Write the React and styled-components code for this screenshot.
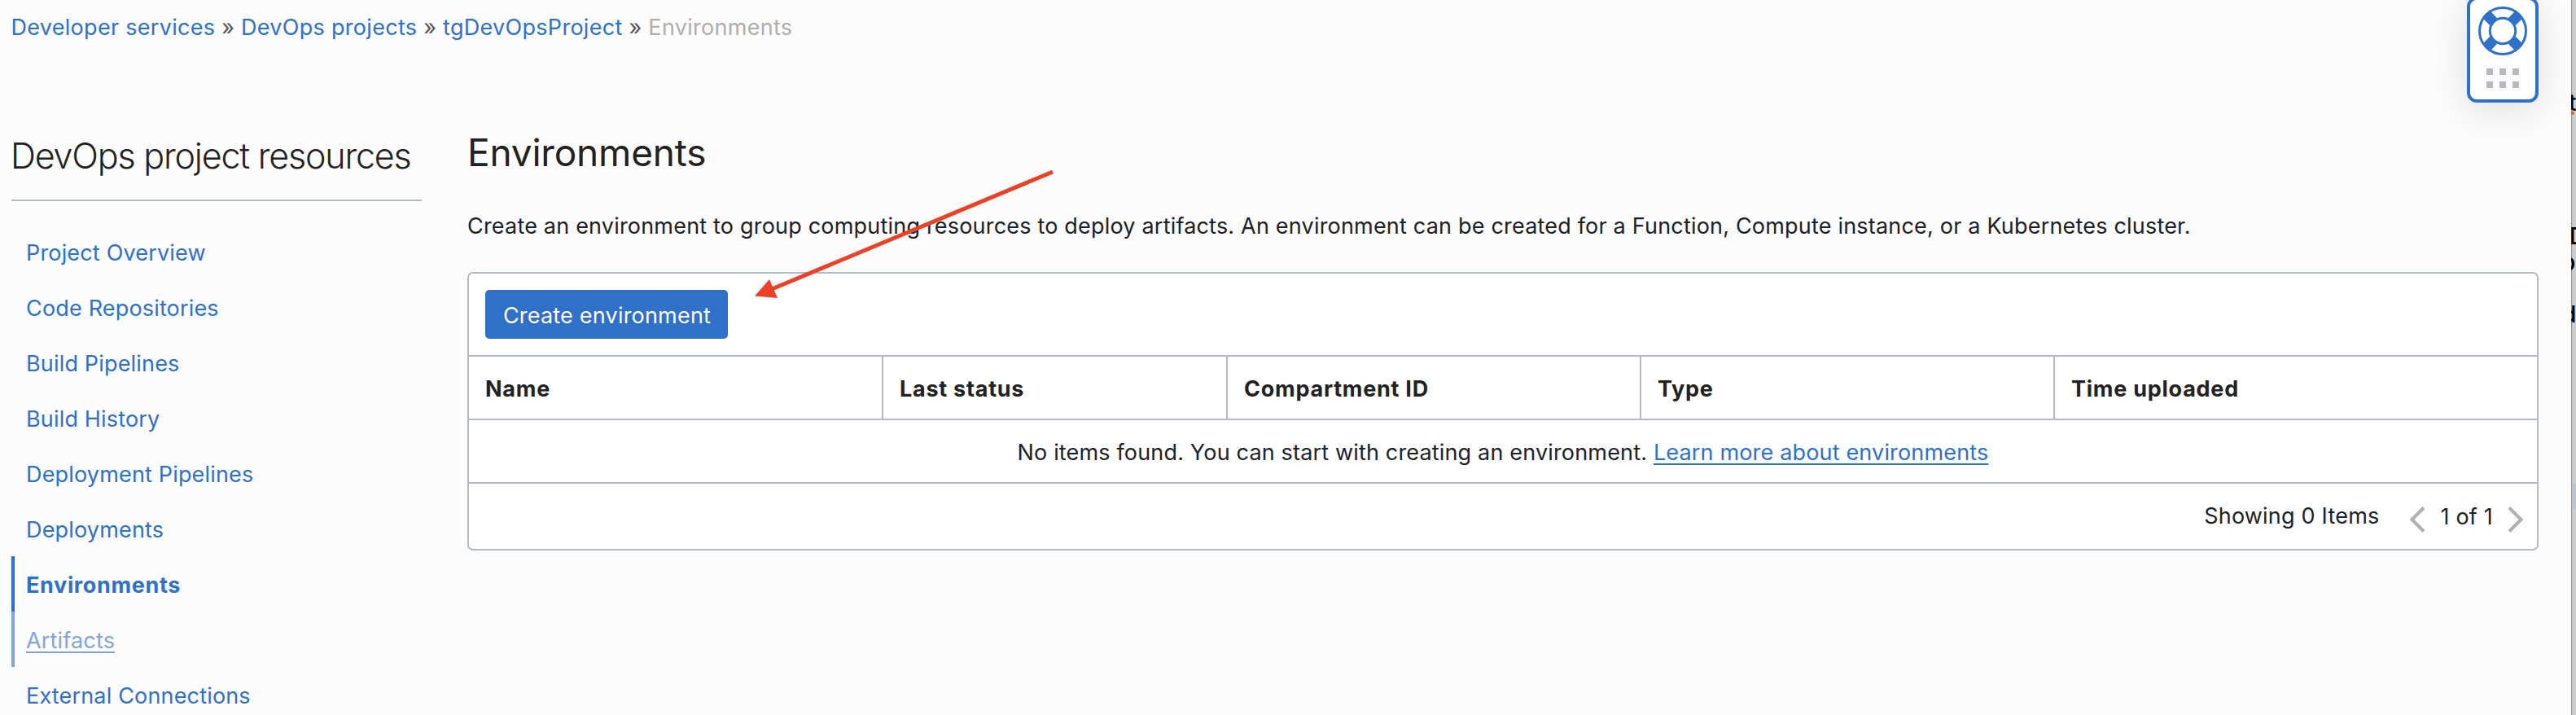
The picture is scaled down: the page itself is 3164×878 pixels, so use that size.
import React from 'react';
import styled, { createGlobalStyle } from 'styled-components';

const blue = '#2f70c8';
const line = '#b4bac1';

const GlobalStyle = createGlobalStyle`
  * { box-sizing: border-box; }
  html, body { margin: 0; padding: 0; background: #fcfcfc; }
  body {
    overflow: hidden;
    font-family: Inter, "Liberation Sans", sans-serif;
    font-size: 27px;
    letter-spacing: 0.2px;
    color: #1b2128;
    white-space: nowrap;
  }
`;

const Page = styled.div`
  position: relative;
  display: flex;
  width: 3164px;
  height: 878px;
  overflow: hidden;
`;

const Content = styled.div`
  flex: 1;
  min-width: 0;
`;

const Breadcrumbs = styled.nav`
  height: 66px;
  padding: 1px 0 0 13.5px;
  line-height: 66px;
  letter-spacing: 0.29px;
  color: #555;
`;

const Crumb = styled.a`
  color: ${(p) => (p.$current ? '#aeaeae' : blue)};
`;

const Body = styled.div`
  display: flex;
  gap: 56px;
  padding: 0 40px 0 14px;
`;

const Sidebar = styled.aside`
  width: 504px;
  flex: none;
  padding-top: 94px;
`;

const SidebarTitle = styled.h2`
  margin: 0 0 0 -1px;
  padding-bottom: 23px;
  font-size: 43px;
  font-weight: 300;
  line-height: 62px;
  letter-spacing: -1.2px;
  color: #222;
`;

const NavList = styled.ul`
  list-style: none;
  margin: 0;
  padding: 28px 0 0;
  border-top: 2px solid ${line};
`;

const tones = { normal: 'transparent', active: blue, hover: '#82a4de' };

const NavItem = styled.li`
  height: 68px;
  padding: 2px 0 0 14px;
  line-height: 68px;
  border-left: 4px solid ${(p) => tones[p.$state]};
  color: ${(p) => (p.$state === 'hover' ? tones.hover : blue)};
  font-weight: ${(p) => (p.$state === 'active' ? 700 : 400)};
  letter-spacing: ${(p) => (p.$state === 'active' ? '0.65px' : '0.17px')};
  text-decoration: ${(p) => (p.$state === 'hover' ? 'underline 2px' : 'none')};
  text-underline-offset: 4px;
  text-decoration-skip-ink: none;
`;

const Main = styled.main`
  flex: 1;
  min-width: 0;
  padding-top: 91px;
`;

const Title = styled.h1`
  margin: 0;
  font-size: 46px;
  font-weight: 400;
  line-height: 60px;
  letter-spacing: -0.2px;
  color: #222;
`;

const Description = styled.p`
  margin: 41px 0 36px;
  line-height: 40px;
  letter-spacing: 0.193px;
`;

const Panel = styled.section`
  border: 2px solid ${line};
  border-radius: 7px;
  background: #fff;
`;

const Toolbar = styled.div`
  display: flex;
  align-items: center;
  height: 102px;
  padding: 0 20px;
  border-bottom: 2px solid ${line};
`;

const Button = styled.button`
  width: 298px;
  height: 60px;
  padding: 2px 0 0 1px;
  border: 0;
  border-radius: 5px;
  background: ${blue};
  color: #fff;
  font: inherit;
  letter-spacing: inherit;
`;

const HeaderRow = styled.div`
  display: grid;
  grid-template-columns: 509px 423px 508px 508px 1fr;
  height: 78px;
  border-bottom: 2px solid ${line};
`;

const HeaderCell = styled.div`
  padding: 2px 0 0 20px;
  line-height: 76px;
  border-right: 2px solid ${line};
  font-weight: 700;
  letter-spacing: 0.75px;
  color: #222;
  &:last-child { border-right: 0; }
`;

const EmptyRow = styled.div`
  height: 78px;
  padding-top: 2px;
  border-bottom: 2px solid ${line};
  line-height: 76px;
  letter-spacing: 0.165px;
  text-align: center;
`;

const TextLink = styled.a`
  color: ${blue};
  text-decoration: underline 2px;
  text-underline-offset: 4px;
  text-decoration-skip-ink: none;
`;

const Footer = styled.div`
  display: flex;
  justify-content: flex-end;
  height: 80px;
  padding-right: 16px;
  line-height: 80px;
`;

const Pager = styled.div`
  display: flex;
  align-items: center;
  gap: 18px;
  margin-left: 37px;
  padding-top: 2px;
  color: #222;
`;

const Chevron = styled.svg`
  width: 20px;
  height: 36px;
  margin-top: 6px;
  fill: none;
  stroke: #b0b0b0;
  stroke-width: 4;
`;

const HelpCard = styled.div`
  position: absolute;
  top: -4px;
  left: 3030px;
  width: 88px;
  height: 130px;
  display: flex;
  flex-direction: column;
  align-items: center;
  gap: 16px;
  padding-top: 8px;
  border: 4px solid ${blue};
  border-radius: 12px;
  background: #fff;
  box-shadow: 0 8px 48px rgba(0, 0, 0, 0.12);
`;

const Lifebuoy = styled.svg`
  display: block;
  width: 60px;
  height: 60px;
  fill: none;
  stroke: ${blue};
`;

const Grip = styled.div`
  display: grid;
  grid-template-columns: repeat(3, 8px);
  gap: 8px;
`;

const GripDot = styled.span`
  height: 8px;
  background: #b5bac1;
`;

const Arrow = styled.svg`
  position: absolute;
  left: 920px;
  top: 200px;
  width: 380px;
  height: 175px;
`;

const BackWindow = styled.div`
  position: relative;
  z-index: 1;
  flex: none;
  width: 6px;
  height: 878px;
  overflow: hidden;
  background: #cdcdcd;
  box-shadow: inset 2px 0 1px -1px #8d8d8d;
`;

const BackGlyph = styled.span`
  position: absolute;
  top: ${(p) => p.$top}px;
  left: ${(p) => p.$left}px;
  line-height: 32px;
  font-size: 28px;
  font-weight: 500;
  letter-spacing: 0;
  color: #000;
`;

const Squiggle = styled.span`
  position: absolute;
  top: 137px;
  left: -2px;
  width: 6px;
  height: 4px;
  border-radius: 2px;
  background: #cc6b3e;
`;

const Selection = styled.span`
  position: absolute;
  top: 594px;
  left: 1px;
  width: 5px;
  height: 32px;
  background: #bec5d2;
`;

const navItems = [
  ['Project Overview', 'normal'],
  ['Code Repositories', 'normal'],
  ['Build Pipelines', 'normal'],
  ['Build History', 'normal'],
  ['Deployment Pipelines', 'normal'],
  ['Deployments', 'normal'],
  ['Environments', 'active'],
  ['Artifacts', 'hover'],
  ['External Connections', 'normal'],
];

const columns = ['Name', 'Last status', 'Compartment ID', 'Type', 'Time uploaded'];

export default function App() {
  return (
    <>
      <GlobalStyle />
      <Page>
        <Content>
          <Breadcrumbs>
            <Crumb>Developer services</Crumb> » <Crumb>DevOps projects</Crumb> »{' '}
            <Crumb>tgDevOpsProject</Crumb> » <Crumb $current>Environments</Crumb>
          </Breadcrumbs>
          <Body>
            <Sidebar>
              <SidebarTitle>DevOps project resources</SidebarTitle>
              <NavList>
                {navItems.map(([label, state]) => (
                  <NavItem key={label} $state={state}>{label}</NavItem>
                ))}
              </NavList>
            </Sidebar>
            <Main>
              <Title>Environments</Title>
              <Description>
                Create an environment to group computing resources to deploy artifacts. An environment
                can be created for a Function, Compute instance, or a Kubernetes cluster.
              </Description>
              <Panel>
                <Toolbar>
                  <Button>Create environment</Button>
                </Toolbar>
                <HeaderRow>
                  {columns.map((name) => (
                    <HeaderCell key={name}>{name}</HeaderCell>
                  ))}
                </HeaderRow>
                <EmptyRow>
                  No items found. You can start with creating an environment.{' '}
                  <TextLink>Learn more about environments</TextLink>
                </EmptyRow>
                <Footer>
                  <span>Showing 0 Items</span>
                  <Pager>
                    <Chevron viewBox="0 0 20 36"><path d="M18 3.5 3.5 18 18 32.5" /></Chevron>
                    <span>1 of 1</span>
                    <Chevron viewBox="0 0 20 36"><path d="M2 3.5 16.5 18 2 32.5" /></Chevron>
                  </Pager>
                </Footer>
              </Panel>
            </Main>
          </Body>
        </Content>
        <BackWindow>
          <BackGlyph $top={110} $left={-3}>t</BackGlyph>
          <Squiggle />
          <BackGlyph $top={274} $left={-2}>D</BackGlyph>
          <BackGlyph $top={306} $left={-12}>p</BackGlyph>
          <BackGlyph $top={370} $left={-11}>d</BackGlyph>
          <Selection />
        </BackWindow>
        <HelpCard>
          <Lifebuoy viewBox="0 0 60 60">
            <circle cx="30" cy="30" r="28.5" strokeWidth="3" />
            <circle cx="30" cy="30" r="15.7" strokeWidth="3" />
            <path
              strokeWidth="12.7"
              d="M41.5 18.5 50.2 9.8M18.5 18.5 9.8 9.8M41.5 41.5l8.7 8.7M18.5 41.5l-8.7 8.7"
            />
          </Lifebuoy>
          <Grip>
            {[0, 1, 2, 3, 4, 5].map((n) => <GripDot key={n} />)}
          </Grip>
        </HelpCard>
        <Arrow viewBox="920 200 380 175">
          <path d="M1293 211 948 355" stroke="#eb4127" strokeWidth="5" />
          <path d="M927 363.5 945 343 955 366z" fill="#eb4127" />
        </Arrow>
      </Page>
    </>
  );
}
